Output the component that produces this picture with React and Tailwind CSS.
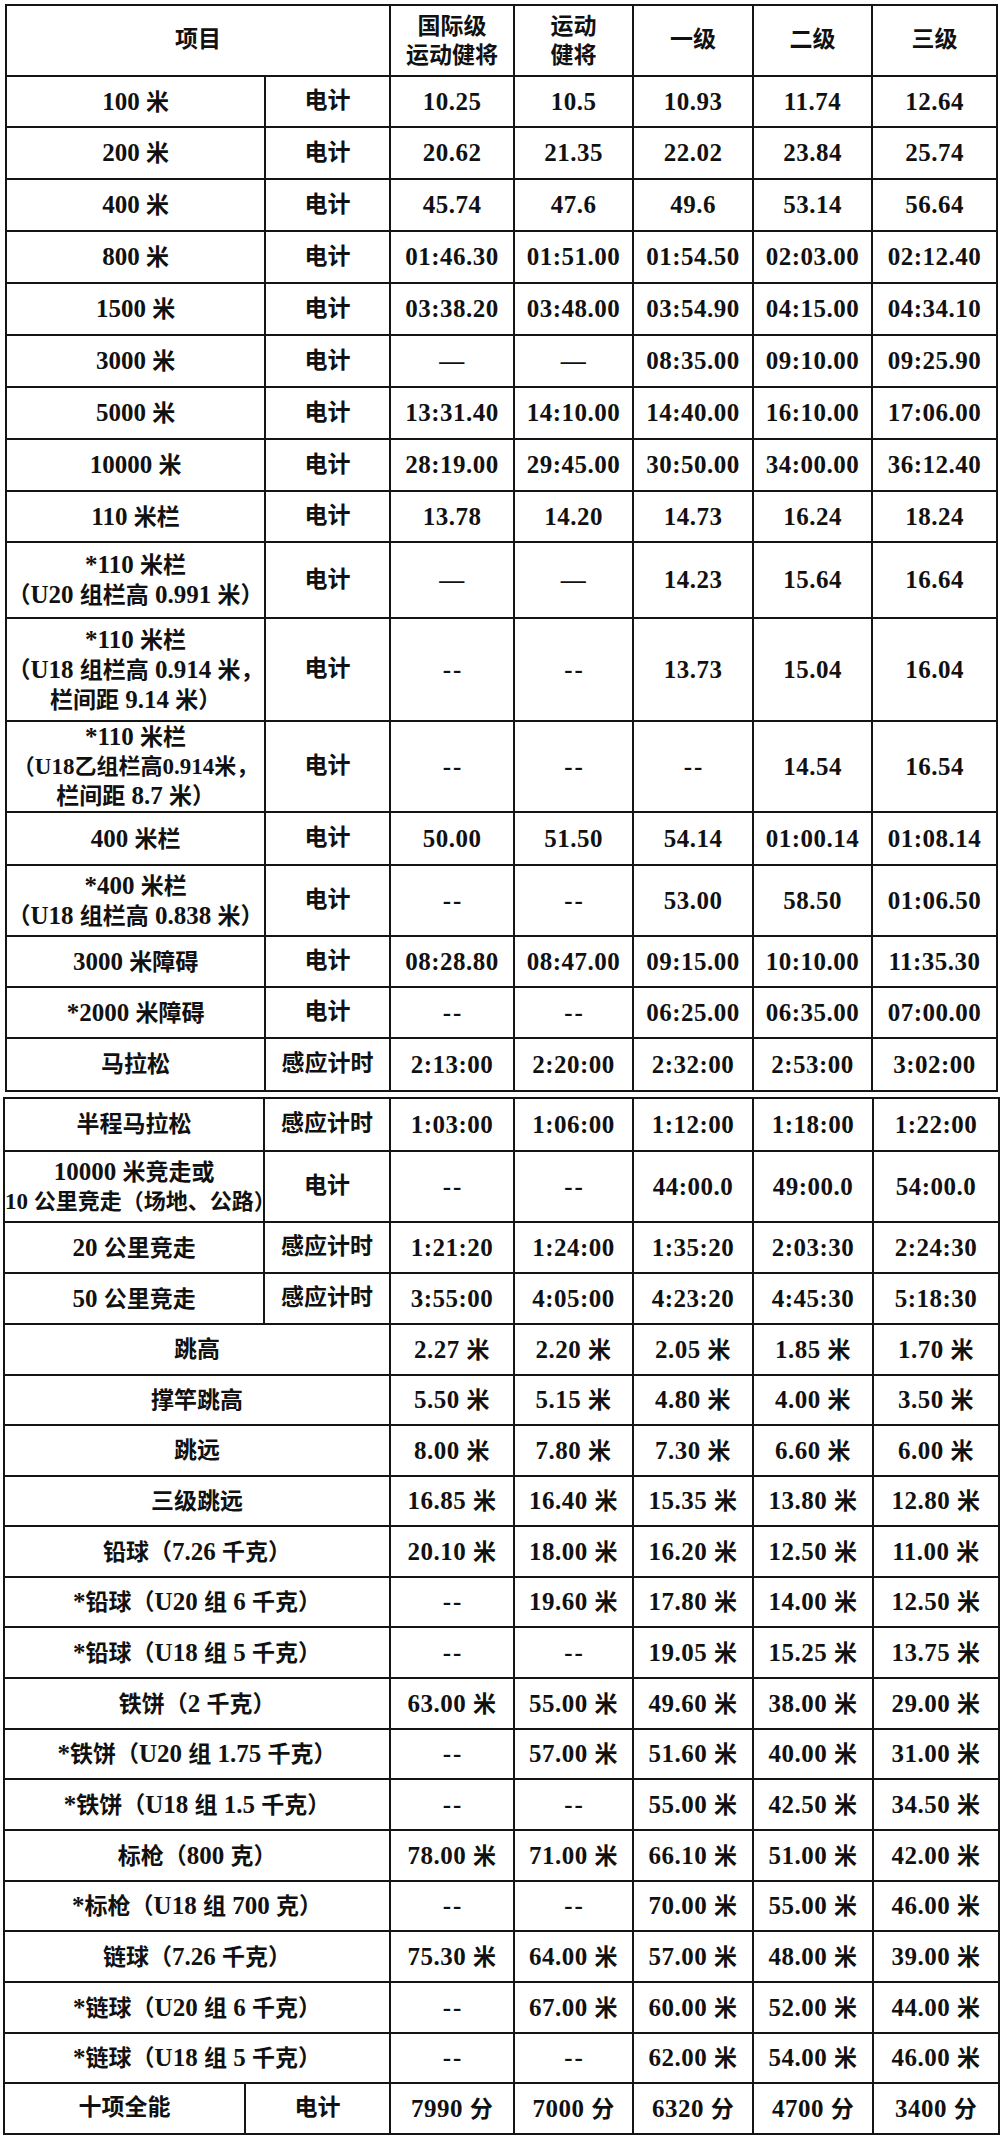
import React from 'react';

const D1 = '—';
const D2 = '--';

// 径赛（第一张表）
const track = [
  { name: ['100 米'], t: '电计', v: ['10.25', '10.5', '10.93', '11.74', '12.64'], h: 51 },
  { name: ['200 米'], t: '电计', v: ['20.62', '21.35', '22.02', '23.84', '25.74'], h: 52 },
  { name: ['400 米'], t: '电计', v: ['45.74', '47.6', '49.6', '53.14', '56.64'], h: 52 },
  { name: ['800 米'], t: '电计', v: ['01:46.30', '01:51.00', '01:54.50', '02:03.00', '02:12.40'], h: 52 },
  { name: ['1500 米'], t: '电计', v: ['03:38.20', '03:48.00', '03:54.90', '04:15.00', '04:34.10'], h: 52 },
  { name: ['3000 米'], t: '电计', v: [D1, D1, '08:35.00', '09:10.00', '09:25.90'], h: 52 },
  { name: ['5000 米'], t: '电计', v: ['13:31.40', '14:10.00', '14:40.00', '16:10.00', '17:06.00'], h: 52 },
  { name: ['10000 米'], t: '电计', v: ['28:19.00', '29:45.00', '30:50.00', '34:00.00', '36:12.40'], h: 52 },
  { name: ['110 米栏'], t: '电计', v: ['13.78', '14.20', '14.73', '16.24', '18.24'], h: 51 },
  { name: ['*110 米栏', '（U20 组栏高 0.991 米）'], t: '电计', v: [D1, D1, '14.23', '15.64', '16.64'], h: 76 },
  { name: ['*110 米栏', '（U18 组栏高 0.914 米，', '栏间距 9.14 米）'], t: '电计', v: [D2, D2, '13.73', '15.04', '16.04'], h: 103 },
  { name: ['*110 米栏', '（U18乙组栏高0.914米，', '栏间距 8.7 米）'], t: '电计', v: [D2, D2, D2, '14.54', '16.54'], h: 88, tight: 1 },
  { name: ['400 米栏'], t: '电计', v: ['50.00', '51.50', '54.14', '01:00.14', '01:08.14'], h: 53 },
  { name: ['*400 米栏', '（U18 组栏高 0.838 米）'], t: '电计', v: [D2, D2, '53.00', '58.50', '01:06.50'], h: 71 },
  { name: ['3000 米障碍'], t: '电计', v: ['08:28.80', '08:47.00', '09:15.00', '10:10.00', '11:35.30'], h: 51 },
  { name: ['*2000 米障碍'], t: '电计', v: [D2, D2, '06:25.00', '06:35.00', '07:00.00'], h: 51 },
  { name: ['马拉松'], t: '感应计时', v: ['2:13:00', '2:20:00', '2:32:00', '2:53:00', '3:02:00'], h: 53 },
];

// 第二张表
const rest = [
  { name: ['半程马拉松'], t: '感应计时', v: ['1:03:00', '1:06:00', '1:12:00', '1:18:00', '1:22:00'], h: 53 },
  { name: ['10000 米竞走或', '10 公里竞走（场地、公路）'], t: '电计', v: [D2, D2, '44:00.0', '49:00.0', '54:00.0'], h: 71, tight: 1 },
  { name: ['20 公里竞走'], t: '感应计时', v: ['1:21:20', '1:24:00', '1:35:20', '2:03:30', '2:24:30'], h: 51 },
  { name: ['50 公里竞走'], t: '感应计时', v: ['3:55:00', '4:05:00', '4:23:20', '4:45:30', '5:18:30'], h: 51 },
  { name: ['跳高'], v: ['2.27 米', '2.20 米', '2.05 米', '1.85 米', '1.70 米'], h: 51 },
  { name: ['撑竿跳高'], v: ['5.50 米', '5.15 米', '4.80 米', '4.00 米', '3.50 米'], h: 50 },
  { name: ['跳远'], v: ['8.00 米', '7.80 米', '7.30 米', '6.60 米', '6.00 米'], h: 51 },
  { name: ['三级跳远'], v: ['16.85 米', '16.40 米', '15.35 米', '13.80 米', '12.80 米'], h: 50 },
  { name: ['铅球（7.26 千克）'], v: ['20.10 米', '18.00 米', '16.20 米', '12.50 米', '11.00 米'], h: 51 },
  { name: ['*铅球（U20 组 6 千克）'], v: [D2, '19.60 米', '17.80 米', '14.00 米', '12.50 米'], h: 50 },
  { name: ['*铅球（U18 组 5 千克）'], v: [D2, D2, '19.05 米', '15.25 米', '13.75 米'], h: 51 },
  { name: ['铁饼（2 千克）'], v: ['63.00 米', '55.00 米', '49.60 米', '38.00 米', '29.00 米'], h: 51 },
  { name: ['*铁饼（U20 组 1.75 千克）'], v: [D2, '57.00 米', '51.60 米', '40.00 米', '31.00 米'], h: 50 },
  { name: ['*铁饼（U18 组 1.5 千克）'], v: [D2, D2, '55.00 米', '42.50 米', '34.50 米'], h: 51 },
  { name: ['标枪（800 克）'], v: ['78.00 米', '71.00 米', '66.10 米', '51.00 米', '42.00 米'], h: 51 },
  { name: ['*标枪（U18 组 700 克）'], v: [D2, D2, '70.00 米', '55.00 米', '46.00 米'], h: 50 },
  { name: ['链球（7.26 千克）'], v: ['75.30 米', '64.00 米', '57.00 米', '48.00 米', '39.00 米'], h: 51 },
  { name: ['*链球（U20 组 6 千克）'], v: [D2, '67.00 米', '60.00 米', '52.00 米', '44.00 米'], h: 51 },
  { name: ['*链球（U18 组 5 千克）'], v: [D2, D2, '62.00 米', '54.00 米', '46.00 米'], h: 50 },
];

const cell = 'border-2 border-[#151515] p-0 text-center align-middle whitespace-nowrap';

// 数字和字母比汉字大一号（原表用宋体数字）
function Txt({ s, small }) {
  const parts = s.split(/([\u3000-\u9fff\uff00-\uffef]+)/).filter(Boolean);
  return parts.map((p, i) =>
    /[\u3000-\u9fff\uff00-\uffef]/.test(p) ? (
      <span key={i}>{p}</span>
    ) : (
      <span key={i} className={small ? 'text-[23px]' : 'text-[25px]'}>{p}</span>
    )
  );
}

function Lines({ lines, tight }) {
  return lines.map((l, i) => {
    const sm = tight && i === 1;
    return (
      <div key={i} className={sm ? 'leading-[29px] text-[22px]' : 'leading-[29px]'}>
        <Txt s={l} small={sm} />
      </div>
    );
  });
}

function Val({ children }) {
  const dash = children === D2;
  return (
    <td className={cell}>
      {dash ? (
        <span className="text-[25px] tracking-[2px] pl-[2px]">{children}</span>
      ) : (
        <span className="tracking-[0.5px]"><Txt s={children} /></span>
      )}
    </td>
  );
}

export default function App() {
  return (
    <div className="w-[1000px] min-h-[2136px] bg-white pt-[4px] pl-[5px] text-[23px] font-bold text-[#111] font-['Liberation_Serif','Noto_Sans_CJK_SC',serif]">
      <table className="table-fixed border-collapse w-[991px]">
        <colgroup>
          <col className="w-[259px]" />
          <col className="w-[125px]" />
          <col className="w-[124px]" />
          <col className="w-[119px]" />
          <col className="w-[120px]" />
          <col className="w-[119px]" />
          <col className="w-[125px]" />
        </colgroup>
        <tbody>
          <tr className="h-[71px]">
            <td colSpan={2} className={cell}>项目</td>
            <td className={cell}><Lines lines={['国际级', '运动健将']} /></td>
            <td className={cell}><Lines lines={['运动', '健将']} /></td>
            <td className={cell}>一级</td>
            <td className={cell}>二级</td>
            <td className={cell}>三级</td>
          </tr>
          {track.map((r, i) => (
            <tr key={i} style={{ height: r.h }}>
              <td className={cell}><Lines lines={r.name} tight={r.tight} /></td>
              <td className={cell}>{r.t}</td>
              {r.v.map((v, j) => <Val key={j}>{v}</Val>)}
            </tr>
          ))}
        </tbody>
      </table>

      <table className="table-fixed border-collapse w-[995px] mt-[5px] -ml-[2px]">
        <colgroup>
          <col className="w-[241px]" />
          <col className="w-[19px]" />
          <col className="w-[126px]" />
          <col className="w-[124px]" />
          <col className="w-[119px]" />
          <col className="w-[120px]" />
          <col className="w-[120px]" />
          <col className="w-[126px]" />
        </colgroup>
        <tbody>
          {rest.map((r, i) => (
            <tr key={i} style={{ height: r.h }}>
              {r.t ? (
                <>
                  <td colSpan={2} className={cell}><Lines lines={r.name} tight={r.tight} /></td>
                  <td className={cell}>{r.t}</td>
                </>
              ) : (
                <td colSpan={3} className={cell}><Lines lines={r.name} /></td>
              )}
              {r.v.map((v, j) => <Val key={j}>{v}</Val>)}
            </tr>
          ))}
          <tr className="h-[51px]">
            <td className={cell}>十项全能</td>
            <td colSpan={2} className={cell}>电计</td>
            <Val>7990 分</Val>
            <Val>7000 分</Val>
            <Val>6320 分</Val>
            <Val>4700 分</Val>
            <Val>3400 分</Val>
          </tr>
        </tbody>
      </table>
    </div>
  );
}
